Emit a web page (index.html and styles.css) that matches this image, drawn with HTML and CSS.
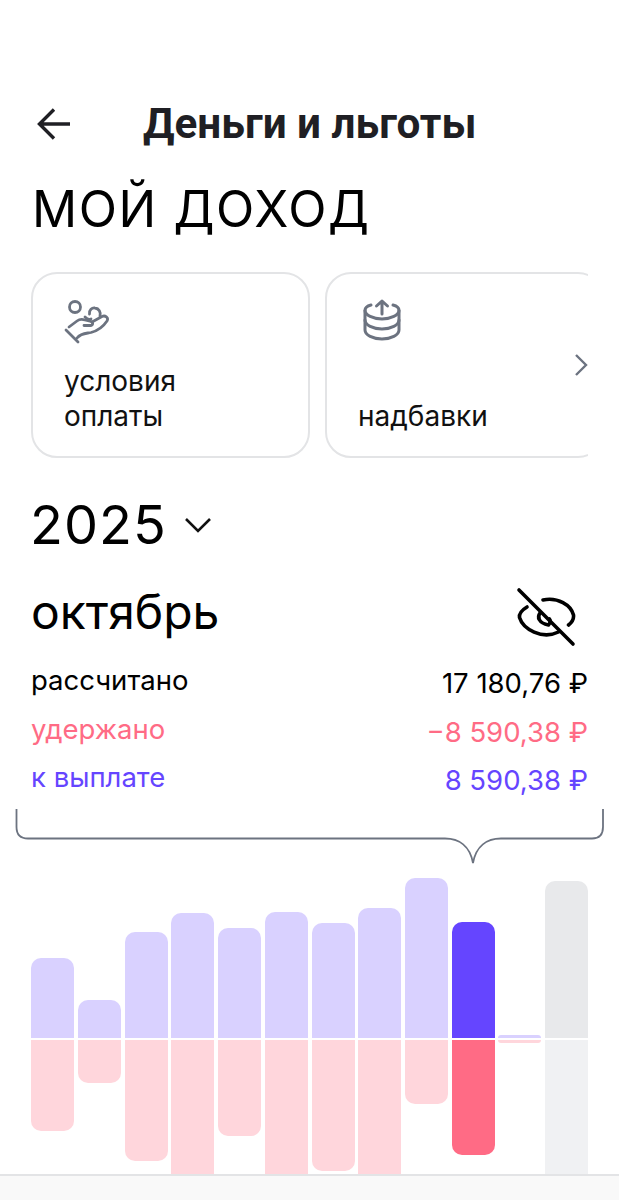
FILE: index.html
```html
<!DOCTYPE html>
<html lang="ru">
<head>
    <meta charset="UTF-8">
    <meta name="viewport" content="width=device-width, initial-scale=1.0">
    <title>Деньги и льготы</title>
    <link rel="stylesheet" href="styles.css">
</head>
<body>
    <main class="screen">
        <header class="topbar">
            <svg class="back" viewBox="0 0 34 34" fill="none" stroke="#1f1f24" stroke-width="3.4">
                <path d="M33 17H3M17 2.5L2.5 17L17 31.5"/>
            </svg>
            <h1 class="topbar-title">Деньги и льготы</h1>
        </header>

        <h2 class="page-title">МОЙ ДОХОД</h2>

        <div class="cards">
            <div class="card">
                <svg class="card-icon" viewBox="0 0 46 46" fill="none" stroke="#6c7380" stroke-width="2.8" stroke-linecap="round" stroke-linejoin="round">
                    <circle cx="11" cy="9" r="5.5"/>
                    <path d="M25.5 16C25 12 28 9.5 31 10C35 10.5 37 14 36 18"/>
                    <path d="M21 19C23 21 25 22 27 21"/>
                    <path d="M2 32L14 44"/>
                    <path d="M5 29L13 23C15 21.500 18 21 21 22L27 23.500C29.500 24.500 29 27.500 26.500 27.500H20"/>
                    <path d="M28 24L38 18.500C41 17 45 19.500 43 23C39 29 33 33 27 34.500C22 35.500 17 35 13 40"/>
                </svg>
                <span class="card-label">условия<br>оплаты</span>
            </div>
            <div class="card">
                <svg class="card-icon" viewBox="-5 0 46 46" fill="none" stroke="#6c7380" stroke-width="3" stroke-linecap="round" stroke-linejoin="round">
                    <path d="M8 7C4 8 2 10 2 12.500C2 17 10 21 19 21C28 21 36 17 36 12.500C36 10 34 8 30 7"/>
                    <path d="M2 12.500V32C2 37 10 41 19 41C28 41 36 37 36 32V12.500"/>
                    <path d="M2 22C2 27 10 31 19 31C28 31 36 27 36 22"/>
                    <path d="M19 16V3M13.500 8L19 3L24.500 8"/>
                </svg>
                <span class="card-label">надбавки</span>
            </div>
            <div class="cards-more">
                <svg class="more-icon" viewBox="0 0 14 24" fill="none" stroke="#6c7380" stroke-width="2.4">
                    <path d="M2 2L12 12L2 22"/>
                </svg>
            </div>
        </div>

        <div class="year">
            <span class="year-value">2025</span>
            <svg class="year-arrow" viewBox="0 0 28 16" fill="none" stroke="#111" stroke-width="2.6">
                <path d="M2 2L14 14L26 2"/>
            </svg>
        </div>

        <div class="month">
            <span class="month-name">октябрь</span>
            <svg class="eye" viewBox="0 0 60 60" fill="none" stroke="#000" stroke-width="3.6" stroke-linecap="round" stroke-linejoin="round">
                <path d="M3 3L57 57"/>
                <path d="M27 13C42 10 55 18 57.500 28C58 32 55 36 52.500 38"/>
                <path d="M11 20C6 23 3 27 3.500 30.500C7 42 26 53 42.500 45"/>
                <path d="M24 26C21 30 22.500 36 32.500 38C34.500 36 34.500 33 33.500 32"/>
            </svg>
        </div>

        <div class="sums">
            <div class="sum">
                <span class="sum-label">рассчитано</span>
                <span class="sum-value">17 180,76 ₽</span>
            </div>
            <div class="sum sum-held">
                <span class="sum-label">удержано</span>
                <span class="sum-value">−8 590,38 ₽</span>
            </div>
            <div class="sum sum-pay">
                <span class="sum-label">к выплате</span>
                <span class="sum-value">8 590,38 ₽</span>
            </div>
        </div>

        <svg class="bracket" viewBox="0 0 619 56" fill="none" stroke="#6c7380" stroke-width="1.8">
            <path d="M16.500 1V19Q16.500 30.500 28 30.500H445C459 30.500 470 38 473 55C476 38 487 30.500 501 30.500H592Q603 30.500 603 19V1"/>
        </svg>

        <div class="chart">
            <div class="bar up" style="height:80px"></div>
            <div class="bar up" style="height:38px"></div>
            <div class="bar up" style="height:106px"></div>
            <div class="bar up" style="height:125px"></div>
            <div class="bar up" style="height:110px"></div>
            <div class="bar up" style="height:126px"></div>
            <div class="bar up" style="height:115px"></div>
            <div class="bar up" style="height:130px"></div>
            <div class="bar up" style="height:160px"></div>
            <div class="bar up now" style="height:116px"></div>
            <div class="bar up thin" style="height:3px"></div>
            <div class="bar up later" style="height:157px"></div>

            <div class="bar down" style="height:91px"></div>
            <div class="bar down" style="height:43px"></div>
            <div class="bar down" style="height:121px"></div>
            <div class="bar down" style="height:160px"></div>
            <div class="bar down" style="height:96px"></div>
            <div class="bar down" style="height:160px"></div>
            <div class="bar down" style="height:131px"></div>
            <div class="bar down" style="height:160px"></div>
            <div class="bar down" style="height:64px"></div>
            <div class="bar down now" style="height:115px"></div>
            <div class="bar down thin" style="height:3px"></div>
            <div class="bar down later" style="height:160px"></div>
        </div>
    </main>
    <footer class="tabbar"></footer>
</body>
</html>
```

FILE: styles.css
```css
* {
    box-sizing: border-box;
}
html, body {
    margin: 0;
    padding: 0;
    background: #fff;
}
body {
    width: 619px;
    height: 1200px;
    display: flex;
    flex-direction: column;
    overflow: hidden;
    font-family: Inter, "Noto Sans", sans-serif;
    color: #000;
}
.screen {
    flex: 1;
    min-height: 0;
    overflow: hidden;
    padding-top: 96px;
}
.topbar {
    display: flex;
    align-items: center;
    height: 56px;
    padding-left: 37px;
}
.back {
    width: 34px;
    height: 34px;
    flex: none;
}
.topbar-title {
    margin: 0 0 0 72px;
    font-family: Roboto, sans-serif;
    font-size: 42.3px;
    font-weight: 700;
    line-height: 56px;
    color: #1f1f24;
    white-space: nowrap;
}
.page-title {
    margin: 27px 0 0 32px;
    font-size: 50px;
    font-weight: 400;
    line-height: 60px;
    letter-spacing: 1.6px;
}
.cards {
    position: relative;
    display: flex;
    gap: 15px;
    width: 557px;
    margin: 33px 0 0 31px;
    overflow: hidden;
}
.card {
    flex: none;
    display: flex;
    flex-direction: column;
    justify-content: space-between;
    width: 279px;
    height: 186px;
    padding: 24px 20px 22px 31px;
    background: #fff;
    border: 2px solid #e3e4e6;
    border-radius: 26px;
}
.card-icon {
    width: 46px;
    height: 46px;
}
.card-label {
    font-size: 28px;
    line-height: 35px;
    color: #111;
}
.cards-more {
    position: absolute;
    top: 60px;
    right: 0;
    display: flex;
    align-items: center;
    justify-content: flex-end;
    width: 40px;
    height: 66px;
    background: linear-gradient(90deg, rgba(255, 255, 255, 0), #fff 45%);
}
.more-icon {
    width: 14px;
    height: 24px;
}
.year {
    display: flex;
    align-items: center;
    gap: 17px;
    margin: 32px 0 0 30px;
    height: 70px;
}
.year-value {
    font-size: 54px;
    line-height: 70px;
    letter-spacing: 1px;
}
.year-arrow {
    width: 28px;
    height: 16px;
}
.month {
    display: flex;
    align-items: center;
    justify-content: space-between;
    margin: 22px 43px 0 31px;
    height: 60px;
}
.month-name {
    font-size: 48px;
    line-height: 60px;
}
.eye {
    width: 60px;
    height: 60px;
    margin-top: 10px;
}
.sums {
    display: flex;
    flex-direction: column;
    gap: 12.5px;
    margin: 20px 31px 0 31px;
}
.sum {
    display: flex;
    justify-content: space-between;
    align-items: flex-start;
    height: 36px;
    font-size: 27.5px;
    line-height: 36px;
}
.sum-value {
    margin-top: 3px;
}
.sum-held {
    color: #ff6b85;
}
.sum-pay {
    color: #6545ff;
}
.bracket {
    display: block;
    width: 619px;
    height: 56px;
    margin-top: 13px;
}
.chart {
    display: grid;
    grid-template-columns: repeat(12, 43px);
    grid-template-rows: 160px 160px;
    column-gap: 3.73px;
    row-gap: 2px;
    margin: 14px 0 0 31.2px;
}
.bar.up {
    align-self: end;
    background: #d9d1ff;
    border-radius: 10px 10px 0 0;
}
.bar.down {
    align-self: start;
    background: #ffd6dc;
    border-radius: 0 0 10px 10px;
}
.bar.up.now {
    background: #6545ff;
}
.bar.down.now {
    background: #ff6b85;
}
.bar.up.later {
    background: #e8e9eb;
}
.bar.down.later {
    background: #f0f1f3;
}
.bar.thin {
    border-radius: 3px 3px 0 0;
}
.bar.down.thin {
    border-radius: 0 0 3px 3px;
}
.tabbar {
    flex: none;
    height: 26px;
    background: #f9f9f9;
    border-top: 2px solid #e3e4e6;
}
```
